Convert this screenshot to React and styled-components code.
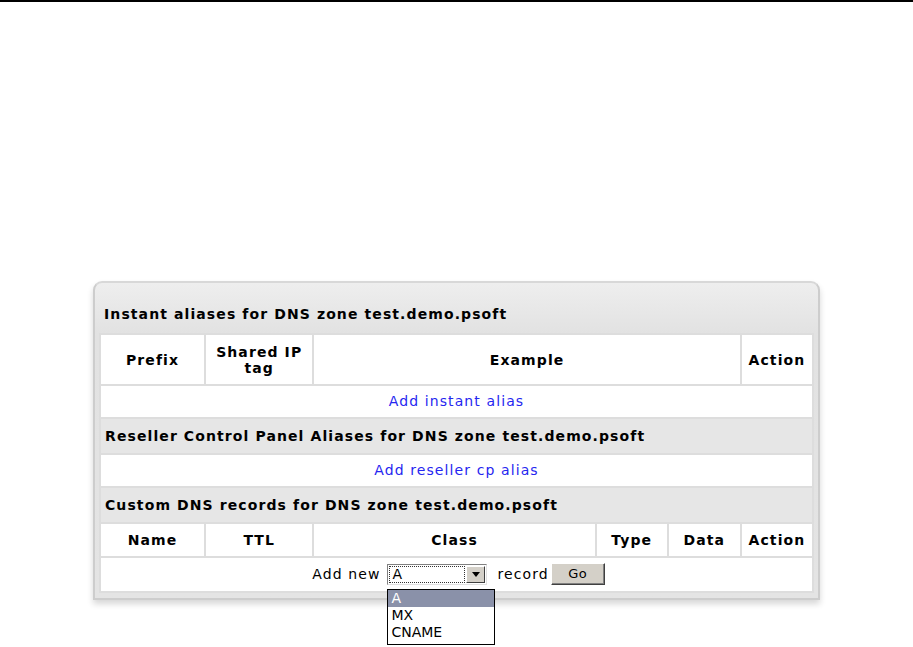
import React from "react";
import styled, { createGlobalStyle } from "styled-components";

const GlobalStyle = createGlobalStyle`
  html, body {
    margin: 0;
    padding: 0;
    background: #ffffff;
    font-family: "DejaVu Sans", "Liberation Sans", sans-serif;
    font-size: 14px;
    letter-spacing: 1.1px;
    color: #000;
  }
`;

const TopRule = styled.div`
  height: 2px;
  background: #000;
`;

const Page = styled.div`
  display: flex;
  justify-content: center;
  padding: 279px 0 60px;
  min-height: 647px;
  box-sizing: border-box;
`;

const Panel = styled.div`
  align-self: flex-start;
  width: 715px;
  padding: 0 4px 5px 4px;
  border: 2px solid #cdcdcd;
  border-top-color: #d8d8d8;
  border-radius: 9px 9px 0 0;
  background: linear-gradient(180deg, #eeeeee 0px, #e2e2e2 50px, #e4e4e4 100%);
  box-shadow: 0 4px 6px rgba(0, 0, 0, 0.16);
`;

const PanelTitle = styled.div`
  height: 50px;
  display: flex;
  align-items: flex-end;
  padding: 0 0 11px 5px;
  box-sizing: border-box;
  font-weight: bold;
`;

const Grid = styled.table`
  width: 100%;
  border-collapse: collapse;
  border: 2px solid #c8c8c8;
  background: #fff;
  table-layout: fixed;
`;

const HeadCell = styled.th`
  border: 2px solid #dddddd;
  padding: ${({ $tall }) => ($tall ? "2px 2px" : "8px 2px")};
  height: ${({ $tall }) => ($tall ? "45px" : "auto")};
  font-weight: bold;
  text-align: center;
  line-height: 16px;
`;

const SectionCell = styled.td`
  border: 2px solid #dddddd;
  background: #e6e6e6;
  font-weight: bold;
  padding: 9px 4px;
  line-height: 16px;
`;

const CenterCell = styled.td`
  border: 2px solid #dddddd;
  text-align: center;
  padding: ${({ $compact }) => ($compact ? "5px 4px 6px" : "7px 4px 8px")};
  line-height: 16px;
`;

const Link = styled.a`
  color: #2626f0;
  text-decoration: none;
  cursor: pointer;
`;

const AddRow = styled.div`
  display: inline-flex;
  align-items: center;
  gap: 5px;
  margin-left: 4px;
  position: relative;
`;

const SelectBox = styled.div`
  position: relative;
  display: flex;
  align-items: center;
  width: 100px;
  height: 21px;
  margin: 0 5px 0 2px;
  box-sizing: border-box;
  border: 1px solid #808080;
  border-right-color: #e0e0e0;
  border-bottom-color: #e0e0e0;
  background: #fff;
  text-align: left;
  letter-spacing: 0;
`;

const SelectValue = styled.span`
  flex: 1;
  height: 17px;
  margin: 1px;
  padding-left: 3px;
  line-height: 17px;
  outline: 1px dotted #333;
  outline-offset: -1px;
`;

const SelectArrow = styled.span`
  width: 19px;
  height: 17px;
  margin-right: 1px;
  background: #d4d0c8;
  border: 1px solid;
  border-color: #fff #404040 #404040 #fff;
  box-sizing: border-box;
  display: flex;
  align-items: center;
  justify-content: center;
`;

const OptionList = styled.ul`
  position: absolute;
  top: 24px;
  left: -1px;
  width: 106px;
  margin: 0;
  padding: 0 0 3px;
  list-style: none;
  border: 1px solid #000;
  background: #fff;
  z-index: 5;
`;

const Option = styled.li`
  height: 17px;
  line-height: 17px;
  padding-left: 3px;
  background: ${({ $active }) => ($active ? "#8a91a9" : "#fff")};
  color: ${({ $active }) => ($active ? "#fff" : "#000")};
`;

const GoButton = styled.button`
  font: inherit;
  font-size: 13px;
  letter-spacing: 0.5px;
  width: 54px;
  height: 22px;
  padding: 0;
  margin-left: -3px;
  background: #d4d0c8;
  border: 1px solid;
  border-color: #fff #404040 #404040 #fff;
  box-shadow: inset -1px -1px 0 #808080;
  color: #000;
`;

const options = ["A", "MX", "CNAME"];

export default function App() {
  return (
    <>
      <GlobalStyle />
      <TopRule />
      <Page>
        <Panel>
          <PanelTitle>Instant aliases for DNS zone test.demo.psoft</PanelTitle>
          <Grid>
            <colgroup>
              <col style={{ width: 105 }} />
              <col style={{ width: 108 }} />
              <col style={{ width: 282 }} />
              <col style={{ width: 72 }} />
              <col style={{ width: 73 }} />
              <col style={{ width: 72 }} />
            </colgroup>
            <tbody>
              <tr>
                <HeadCell $tall>Prefix</HeadCell>
                <HeadCell $tall>
                  Shared IP
                  <br />
                  tag
                </HeadCell>
                <HeadCell $tall colSpan={3}>Example</HeadCell>
                <HeadCell $tall>Action</HeadCell>
              </tr>
              <tr>
                <CenterCell colSpan={6}>
                  <Link>Add instant alias</Link>
                </CenterCell>
              </tr>
              <tr>
                <SectionCell colSpan={6}>
                  Reseller Control Panel Aliases for DNS zone test.demo.psoft
                </SectionCell>
              </tr>
              <tr>
                <CenterCell colSpan={6}>
                  <Link>Add reseller cp alias</Link>
                </CenterCell>
              </tr>
              <tr>
                <SectionCell colSpan={6}>
                  Custom DNS records for DNS zone test.demo.psoft
                </SectionCell>
              </tr>
              <tr>
                <HeadCell>Name</HeadCell>
                <HeadCell>TTL</HeadCell>
                <HeadCell>Class</HeadCell>
                <HeadCell>Type</HeadCell>
                <HeadCell>Data</HeadCell>
                <HeadCell>Action</HeadCell>
              </tr>
              <tr>
                <CenterCell colSpan={6} $compact>
                  <AddRow>
                    Add new
                    <SelectBox>
                      <SelectValue>A</SelectValue>
                      <SelectArrow>
                        <svg width="8" height="5" viewBox="0 0 8 5">
                          <path d="M0 0h8L4 5z" fill="#000" />
                        </svg>
                      </SelectArrow>
                      <OptionList>
                        {options.map((o, i) => (
                          <Option key={o} $active={i === 0}>
                            {o}
                          </Option>
                        ))}
                      </OptionList>
                    </SelectBox>
                    record
                    <GoButton>Go</GoButton>
                  </AddRow>
                </CenterCell>
              </tr>
            </tbody>
          </Grid>
        </Panel>
      </Page>
    </>
  );
}
